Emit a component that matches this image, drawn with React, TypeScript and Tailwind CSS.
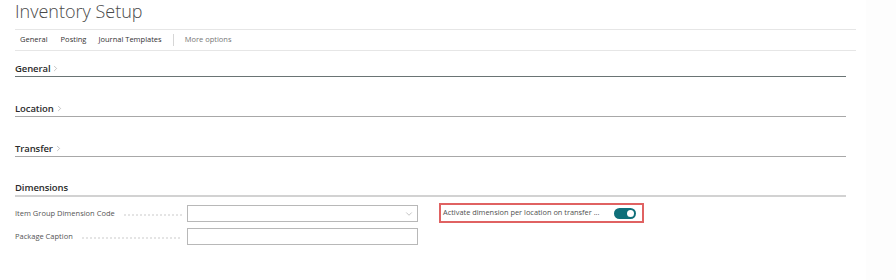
import { ChevronRight, ChevronDown } from 'lucide-react';

function SectionHeader({ title, expandable = true, lineClass }: { title: string; expandable?: boolean; lineClass: string }) {
  return (
    <div className={`w-[831px] flex items-end h-[40px] pb-[3px] ${lineClass}`}>
      <span className="text-[9.5px] font-semibold text-[#2b2b2b] leading-none tracking-[-0.1px]">{title}</span>
      {expandable && <ChevronRight size={9} strokeWidth={1.3} className="text-[#8c8c8c] ml-[1px]" />}
    </div>
  );
}

function FieldRow({ label, select = false }: { label: string; select?: boolean }) {
  return (
    <div className="flex items-center h-[17px]">
      <div className="w-[172px] flex items-center gap-[8px] overflow-hidden pr-[5px]">
        <span className="text-[7.5px] text-[#555] whitespace-nowrap">{label}</span>
        <span className="flex-1 h-[2px] mt-[3px] bg-[radial-gradient(circle,#d6d6d6_0.6px,transparent_0.9px)] bg-[length:4px_2px]"></span>
      </div>
      <div className="w-[231px] h-[17px] border border-[#b8b8b8] flex items-center justify-end pr-[3px]">
        {select && <ChevronDown size={10} strokeWidth={1.2} className="text-[#8a8a8a]" />}
      </div>
    </div>
  );
}

export default function App() {
  return (
    <div className="w-[896px] h-[280px] flex bg-[#fdfdfd] overflow-hidden" style={{ fontFamily: '"Segoe UI", "Open Sans", sans-serif' }}>
      <div className="w-[866px] bg-white pl-[15px]">
        {/* Title */}
        <div className="h-[29px] flex items-start">
          <h1 className="text-[18px] font-light text-[#4a4a4a] leading-[22px]">Inventory Setup</h1>
        </div>

        {/* Action bar */}
        <div className="w-[841px] h-[22px] border-t border-b border-[#e6e6e6] flex items-center pl-[5px] text-[7.5px]">
          <span className="text-[#333] mr-[13px]">General</span>
          <span className="text-[#333] mr-[12px]">Posting</span>
          <span className="text-[#333]">Journal Templates</span>
          <span className="w-px h-[12px] bg-[#d6d6d6] mx-[11px]"></span>
          <span className="text-[#777]">More options</span>
        </div>

        {/* Collapsed groups */}
        <div className="-mt-[14px]">
          <SectionHeader title="General" lineClass="border-b border-[#6a7474]" />
          <SectionHeader title="Location" lineClass="border-b border-[#a8a8a8]" />
          <SectionHeader title="Transfer" lineClass="border-b border-[#a8a8a8]" />
          <SectionHeader title="Dimensions" expandable={false} lineClass="border-b-2 border-[#d2d2d2]" />
        </div>

        {/* Dimensions fields */}
        <div className="flex pt-[8px]">
          <div className="flex flex-col gap-[6px]">
            <FieldRow label="Item Group Dimension Code" select />
            <FieldRow label="Package Caption" />
          </div>
          <div className="ml-[21px] -mt-[2px] w-[205px] h-[20px] border-2 border-[#e06262] flex items-center pl-[2px] pr-[6px]">
            <span className="text-[7.4px] text-[#505050] whitespace-nowrap flex-1">Activate dimension per location on transfer ...</span>
            <span className="w-[22px] h-[11px] rounded-full bg-[#0f6f79] flex items-center justify-end pr-[2px]">
              <span className="w-[7px] h-[7px] rounded-full bg-white"></span>
            </span>
          </div>
        </div>
      </div>
    </div>
  );
}
